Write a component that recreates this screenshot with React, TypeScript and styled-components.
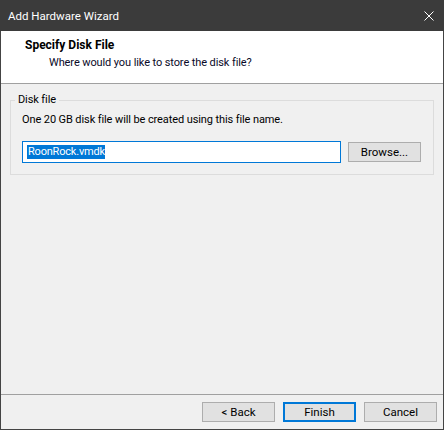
import React from "react";
import styled, { createGlobalStyle } from "styled-components";

const GlobalStyle = createGlobalStyle`
  * { box-sizing: border-box; }
  html, body { margin: 0; padding: 0; background: #f0f0f0; }
  body {
    font-family: "Segoe UI", Roboto, "Liberation Sans", Arial, sans-serif;
    font-size: 11px;
    letter-spacing: -0.1px;
    color: #000;
  }
`;

const Window = styled.div`
  width: 444px;
  height: 430px;
  display: flex;
  flex-direction: column;
  background: #f0f0f0;
  border: 1px solid #444444;
  border-top: none;
`;

const TitleBar = styled.div`
  height: 31px;
  flex: none;
  display: flex;
  align-items: center;
  justify-content: space-between;
  background: #3b3b3b;
  color: #ffffff;
  padding: 0 10px 0 8px;
  margin: 0 -1px;
  font-size: 11.5px;
  letter-spacing: 0;
`;

const Header = styled.div`
  height: 53px;
  flex: none;
  background: #ffffff;
  padding: 6px 0 0 24px;
  border-bottom: 1px solid #a0a0a0;
`;

const HeaderTitle = styled.div`
  font-weight: bold;
  font-size: 12px;
  letter-spacing: 0;
  line-height: 17px;
`;

const HeaderSub = styled.div`
  line-height: 17px;
  padding-left: 24px;
  color: #0a0a28;
`;

const Body = styled.div`
  flex: 1;
  padding: 8px 9px 0 9px;
`;

const Group = styled.fieldset`
  margin: 0;
  padding: 3px 11px 11px 11px;
  border: 1px solid #dcdcdc;
`;

const GroupLabel = styled.legend`
  padding: 0 3px;
  margin-left: -7px;
  line-height: 16px;
`;

const Note = styled.div`
  line-height: 17px;
`;

const FileRow = styled.div`
  display: flex;
  align-items: center;
  gap: 7px;
  margin-top: 13px;
`;

const FileField = styled.div`
  width: 319px;
  height: 22px;
  display: flex;
  align-items: center;
  padding-left: 4px;
  background: #ffffff;
  border: 1px solid #0078d7;
`;

const Selected = styled.span`
  background: #0078d7;
  color: #ffffff;
  line-height: 14px;
  padding-left: 1px;
  letter-spacing: -0.2px;
`;

const Footer = styled.div`
  flex: none;
  height: 35px;
  display: flex;
  justify-content: flex-end;
  align-items: flex-start;
  gap: 8px;
  padding: 7px 6px 0 0;
  border-top: 1px solid #a0a0a0;
`;

const Button = styled.button<{ $primary?: boolean }>`
  width: 73px;
  height: 20px;
  padding: 0;
  font: inherit;
  font-size: 11.5px;
  letter-spacing: 0;
  color: #000;
  background: #e1e1e1;
  border: ${(p) => (p.$primary ? "2px solid #0078d7" : "1px solid #adadad")};
`;

const CloseIcon = () => (
  <svg width="10" height="10" viewBox="0 0 10 10">
    <path d="M0.5 0.5 L9.5 9.5 M9.5 0.5 L0.5 9.5" stroke="#ffffff" strokeWidth="1" />
  </svg>
);

export default function App() {
  return (
    <>
      <GlobalStyle />
      <Window>
        <TitleBar>
          <span>Add Hardware Wizard</span>
          <CloseIcon />
        </TitleBar>
        <Header>
          <HeaderTitle>Specify Disk File</HeaderTitle>
          <HeaderSub>Where would you like to store the disk file?</HeaderSub>
        </Header>
        <Body>
          <Group>
            <GroupLabel>Disk file</GroupLabel>
            <Note>One 20 GB disk file will be created using this file name.</Note>
            <FileRow>
              <FileField>
                <Selected>RoonRock.vmdk</Selected>
              </FileField>
              <Button>Browse...</Button>
            </FileRow>
          </Group>
        </Body>
        <Footer>
          <Button>&lt; Back</Button>
          <Button $primary>Finish</Button>
          <Button>Cancel</Button>
        </Footer>
      </Window>
    </>
  );
}
